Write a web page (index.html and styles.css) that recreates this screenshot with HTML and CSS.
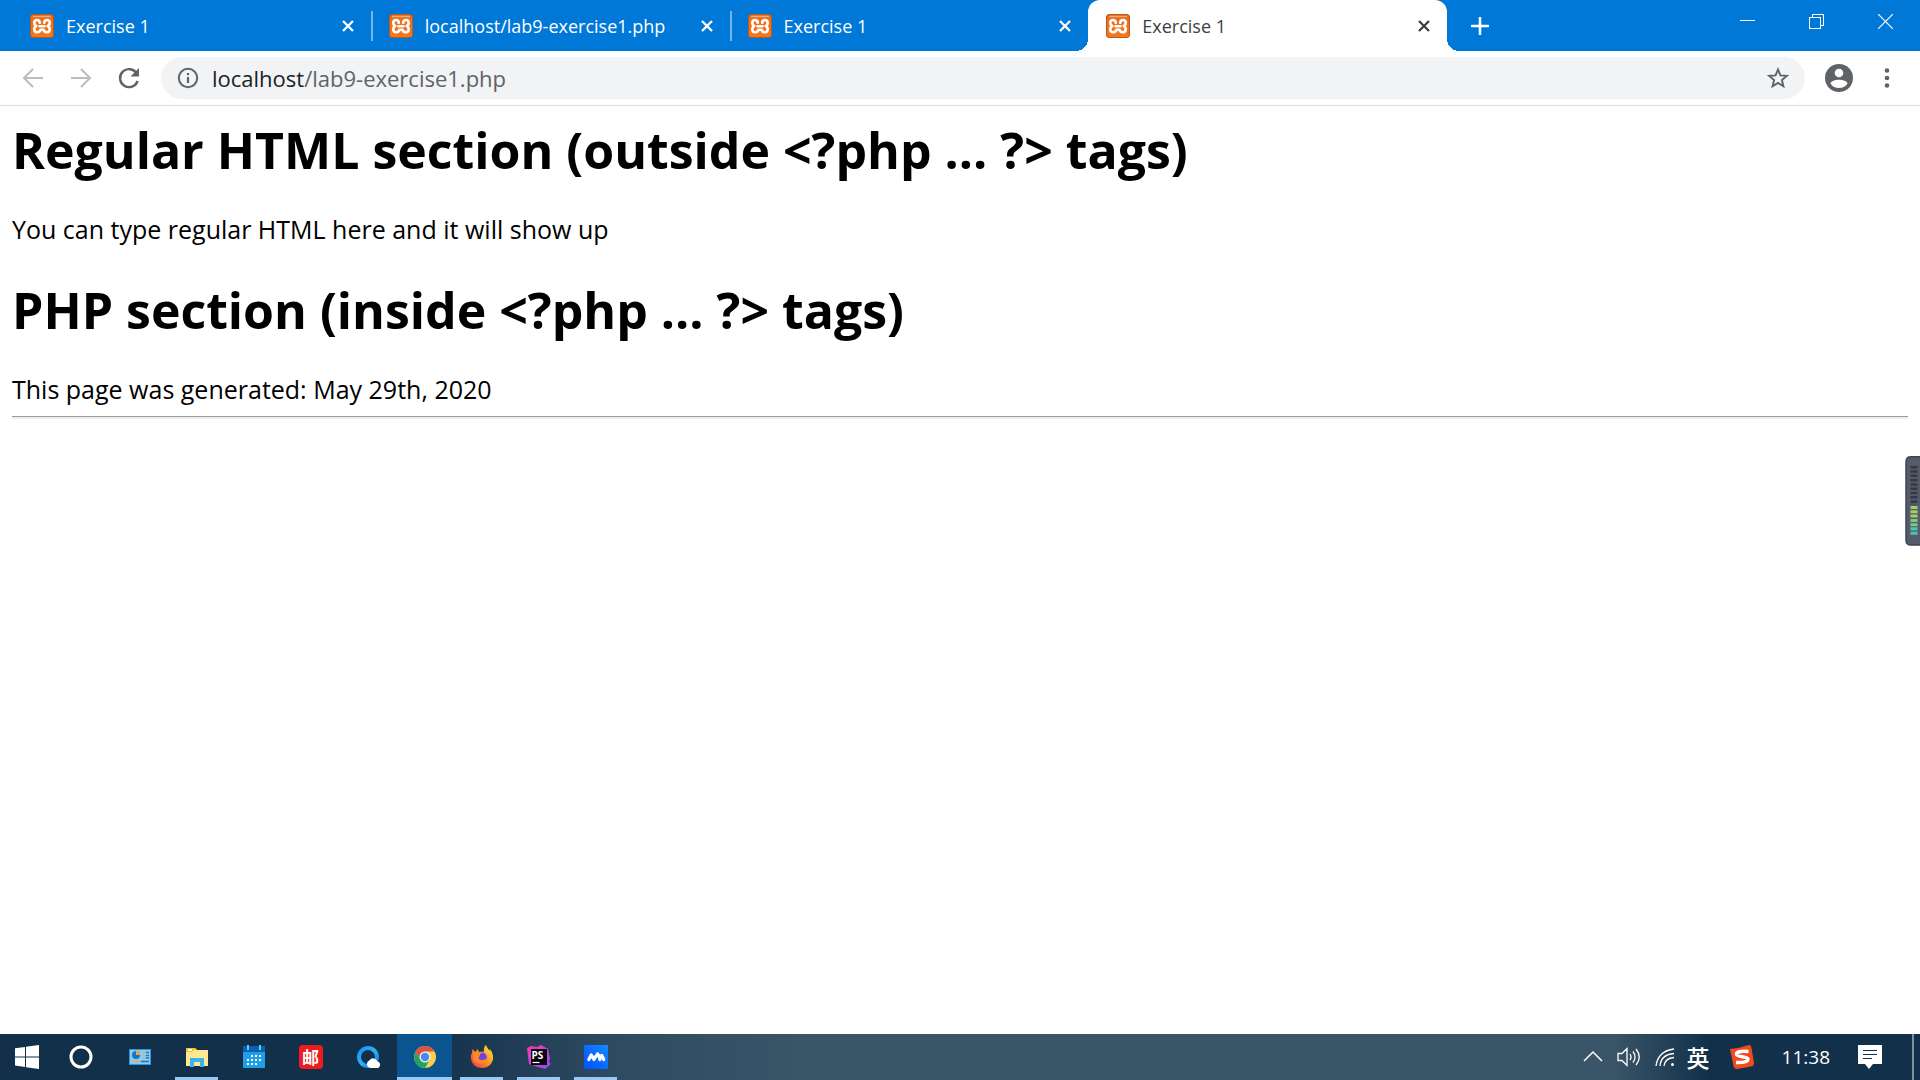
FILE: index.html
```
<!DOCTYPE html>
<html lang="en">
<head>
<meta charset="utf-8">
<title>Exercise 1</title>
<link rel="stylesheet" href="styles.css">
</head>
<body>
<svg class="defs" aria-hidden="true">
  <defs>
    <linearGradient id="xg" x1="0" y1="0" x2="0" y2="1"><stop offset="0" stop-color="#d9661f"/><stop offset=".2" stop-color="#ee6f1c"/><stop offset="1" stop-color="#f5771f"/></linearGradient>
    <linearGradient id="qq" x1="0" y1="0" x2="1" y2="1"><stop offset="0" stop-color="#1f8df5"/><stop offset=".5" stop-color="#2cb4fb"/><stop offset="1" stop-color="#1470e0"/></linearGradient>
    <linearGradient id="ff" x1="1" y1="0" x2="0" y2="1"><stop offset="0" stop-color="#fff04a"/><stop offset=".45" stop-color="#ff9a1f"/><stop offset="1" stop-color="#f8265c"/></linearGradient>
    <linearGradient id="ps" x1="0" y1="0" x2="1" y2="1"><stop offset="0" stop-color="#f03c9c"/><stop offset=".5" stop-color="#d240dc"/><stop offset="1" stop-color="#8c4af5"/></linearGradient>
    <linearGradient id="mm" x1="0" y1="1" x2="1" y2="0"><stop offset="0" stop-color="#0050ff"/><stop offset="1" stop-color="#1489ff"/></linearGradient>
    <symbol id="xampp" viewBox="0 0 24 24">
      <rect x=".5" y=".5" width="23" height="23" rx="2.500" fill="url(#xg)" stroke="#b9581c"/>
      <path d="M3 2.500h18" stroke="#f3a878" stroke-width="1.500"/>
      <path d="M9.800 8.800C9.500 5 4.200 5.200 4.300 8.800c0 1.700.8 2.700 2 3.200-1.200.5-2 1.500-2 3.200 0 3.800 5 4 6.200.6h3c1.200 3.400 6.200 3.200 6.200-.6 0-1.700-.8-2.700-2-3.200 1.200-.5 2-1.500 2-3.200.1-3.600-5.200-3.800-5.500 0M9.500 12.200h5" fill="none" stroke="#fff" stroke-width="2.600" stroke-linecap="round" stroke-linejoin="round"/>
    </symbol>
    <symbol id="x" viewBox="0 0 14 14"><path d="M2 2l10 10M12 2L2 12" fill="none" stroke="currentColor" stroke-width="2.300"/></symbol>
  </defs>
</svg>

<header>
  <div class="tabstrip">
    <div class="tabs" role="tablist">
      <div class="tab"><svg class="favicon"><use href="#xampp"/></svg><span class="title">Exercise 1</span><button class="close" aria-label="Close tab"><svg><use href="#x"/></svg></button></div>
      <div class="tab"><svg class="favicon"><use href="#xampp"/></svg><span class="title">localhost/lab9-exercise1.php</span><button class="close" aria-label="Close tab"><svg><use href="#x"/></svg></button></div>
      <div class="tab"><svg class="favicon"><use href="#xampp"/></svg><span class="title">Exercise 1</span><button class="close" aria-label="Close tab"><svg><use href="#x"/></svg></button></div>
      <div class="tab active"><svg class="favicon"><use href="#xampp"/></svg><span class="title">Exercise 1</span><button class="close" aria-label="Close tab"><svg><use href="#x"/></svg></button></div>
    </div>
    <button class="newtab" aria-label="New tab"><svg width="18" height="18" viewBox="0 0 18 18"><path d="M9 1v16M1 9h16" stroke="#fff" stroke-width="2.600" stroke-linecap="round"/></svg></button>
    <div class="winbuttons">
      <button aria-label="Minimize"><svg width="15" height="15" viewBox="0 0 15 15" shape-rendering="crispEdges"><path d="M0 6.500h15" stroke="#fff"/></svg></button>
      <button aria-label="Restore"><svg width="15" height="15" viewBox="0 0 15 15" fill="none" stroke="#fff" shape-rendering="crispEdges"><path d="M.5 3.500h11v11H.5zM3.500 3.500v-3h11v11h-3"/></svg></button>
      <button aria-label="Close"><svg width="15" height="15" viewBox="0 0 15 15"><path d="M0 0l15 15M15 0L0 15" stroke="#fff" stroke-width="1.200"/></svg></button>
    </div>
  </div>

  <div class="toolbar">
    <div class="nav">
      <button aria-label="Back"><svg width="24" height="24" viewBox="0 0 24 24" fill="none" stroke="#babcbe" stroke-width="2"><path d="M22 12H3M12 3l-9 9 9 9"/></svg></button>
      <button aria-label="Forward"><svg width="24" height="24" viewBox="0 0 24 24" fill="none" stroke="#babcbe" stroke-width="2"><path d="M2 12h19M12 3l9 9-9 9"/></svg></button>
      <button aria-label="Reload"><svg width="24" height="24" viewBox="0 0 24 24"><path d="M19.800 7.500A9 9 0 1 0 20.600 15" fill="none" stroke="#5f6368" stroke-width="2.400"/><path d="M22 2v8.500h-8.500z" fill="#5f6368"/></svg></button>
    </div>
    <div class="omnibox">
      <svg width="22" height="22" viewBox="0 0 22 22"><circle cx="11" cy="11" r="9.200" fill="none" stroke="#5f6368" stroke-width="2"/><path d="M11 10v6M11 6v2.200" stroke="#5f6368" stroke-width="2.200"/></svg>
      <span class="url"><span class="host">localhost</span>/lab9-exercise1.php</span>
      <button class="star" aria-label="Bookmark this page"><svg width="22" height="22" viewBox="0 0 22 22"><path d="M11 2.500l2.400 5.900 6.400.5-4.900 4.100 1.500 6.200L11 15.900l-5.400 3.300L7.100 13 2.200 8.900l6.400-.5z" fill="none" stroke="#5f6368" stroke-width="1.900"/></svg></button>
    </div>
    <div class="actions">
      <button aria-label="Profile"><svg width="28" height="28" viewBox="0 0 28 28"><circle cx="14" cy="14" r="14" fill="#5f6368"/><circle cx="14" cy="9" r="4.300" fill="#fff"/><path d="M5.500 19.500c1.500-5 15.500-5 17 0-3.500 6-13.500 6-17 0z" fill="#fff"/></svg></button>
      <button aria-label="Menu"><svg width="6" height="20" viewBox="0 0 6 20" fill="#5f6368"><circle cx="3" cy="2.500" r="2.300"/><circle cx="3" cy="10" r="2.300"/><circle cx="3" cy="17.500" r="2.300"/></svg></button>
    </div>
  </div>
</header>

<main>
  <h1>Regular HTML section (outside &lt;?php ... ?&gt; tags)</h1>
  <p>You can type regular HTML here and it will show up</p>
  <h1>PHP section (inside &lt;?php ... ?&gt; tags)</h1>
  <p>This page was generated: May 29th, 2020</p>
  <hr>
</main>

<svg class="meter" width="15" height="90" viewBox="0 0 15 90">
  <path d="M16 .8H6Q1 .8 1 6v78q0 5 5 5h10z" fill="#555b6b" stroke="#3f4452" stroke-width="1.500"/>
  <path d="M9 10v39" stroke="#353944" stroke-width="7" stroke-dasharray="2.500 1.800"/>
  <path d="M9 50v12" stroke="#a3cf68" stroke-width="7" stroke-dasharray="3 1.300"/>
  <path d="M9 62.900v9" stroke="#79cb80" stroke-width="7" stroke-dasharray="3 1.300"/>
  <path d="M9 71.500v8" stroke="#4fc4aa" stroke-width="7" stroke-dasharray="3 1.300"/>
</svg>

<footer class="taskbar">
  <div class="system">
    <button aria-label="Start"><svg width="24" height="24" viewBox="0 0 24 24" fill="#fff"><path d="M0 3.200l10-1.300v9.600H0zM11 1.700L24 0v11.500H11zM0 12.500h10v9.400L0 20.600zM11 12.500h13V24l-13-1.800z"/></svg></button>
    <button aria-label="Cortana"><svg width="24" height="24" viewBox="0 0 24 24"><circle cx="12" cy="12" r="10" fill="none" stroke="#fff" stroke-width="3"/></svg></button>
  </div>
  <div class="apps">
    <button aria-label="Control Panel"><svg width="24" height="24" viewBox="0 0 24 24"><path d="M1 4h22v16H1z" fill="#3696cc"/><path d="M2 5h20v14H2z" fill="#82cdfa"/><circle cx="8" cy="10" r="4" fill="#1875c5"/><path d="M8 10V6a4 4 0 0 1 4 4z" fill="#ffa52c"/><path d="M15 7.500h2M15 10.500h2M15 13h2" stroke="#ffa52c" stroke-width="1.500"/><path d="M18 7.500h3M18 10.500h3M18 13h3M13 16.500h8" stroke="#1875c5" stroke-width="1.500"/><path d="M4 16.500h9" stroke="#ffa52c"/></svg></button>
    <button class="running" aria-label="File Explorer"><svg width="24" height="24" viewBox="0 0 24 24"><path d="M1 3h9l2 2h11v16H1z" fill="#ffe793"/><path d="M1 3h9l2 2H9L7 7H1z" fill="#f9bd24"/><path d="M3 4h4v2H3z" fill="#fff"/><path d="M5 22v-9h14v9h-4v-5H9v5z" fill="#3bb4ea"/></svg></button>
    <button aria-label="Calendar"><svg width="24" height="24" viewBox="0 0 24 24"><path d="M1 2h22v20q0 1-1 1H2q-1 0-1-1z" fill="#1f9fe8"/><path d="M1 1h22v6H1z" fill="#0c61b0"/><path d="M5 0h2v5H5zM17 0h2v5h-2z" fill="#55d0fa"/><path d="M9 11h10M5 15h14M5 19h10" stroke="#fff" stroke-width="2" stroke-dasharray="2 2"/></svg></button>
    <button aria-label="Mail"><span class="mail">邮</span></button>
    <button aria-label="QQ Browser"><svg width="24" height="24" viewBox="0 0 24 24"><circle cx="12" cy="12" r="9" fill="none" stroke="url(#qq)" stroke-width="4"/><path d="M14.500 23a4 4 0 0 1-1-7.700 4.500 4.500 0 0 1 8 1.200A3.300 3.300 0 0 1 20.500 23z" fill="#fff"/></svg></button>
    <button class="running current" aria-label="Chrome"><svg width="24" height="24" viewBox="0 0 24 24"><circle cx="12" cy="12" r="11" fill="#fcd04a"/><path d="M2.500 6.500A11 11 0 0 1 21.500 6.500H12L7.200 14.700z" fill="#dd5144"/><path d="M2.500 6.500A11 11 0 0 0 12 23l4.800-8.200H7.200z" fill="#1ea362"/><circle cx="12" cy="12" r="5.500" fill="#f1f1f1"/><circle cx="12" cy="12" r="4.200" fill="#4688f4"/></svg></button>
    <button class="running" aria-label="Firefox"><svg width="24" height="24" viewBox="0 0 24 24"><path d="M2 8l.5-4 3 3 2-3 1.500 3q3-1 5 0c-.5-3 .5-6 2-7 1 3 3 4 3.500 6L20 4c2 3 3.500 6 3 10-2 12-20 12-22 0-.3-3 0-4 1-6z" fill="url(#ff)"/><circle cx="12" cy="12.500" r="5" fill="#8048e4"/><path d="M3.500 8c3-2 6 0 9 1-1 2-4 2-4 4 1 3 6 3 8 0 1 6-9 8-13 2z" fill="#ff8b22"/><circle cx="12.500" cy="11.500" r="3" fill="#7040db"/></svg></button>
    <button class="running" aria-label="PhpStorm"><span class="storm"><svg width="24" height="24" viewBox="0 0 24 24"><path d="M0 3l4-2 6 1 4-2 7 4 1 5 1 5-1 3 2 2-6 5-7-2-9-3z" fill="url(#ps)"/><path d="M4 4h16v16H4z" fill="#060608"/><path d="M5.500 17.500h7" stroke="#fff" stroke-width="1.200"/></svg><span class="ps">PS</span></span></button>
    <button class="running" aria-label="Meeting"><svg width="24" height="24" viewBox="0 0 24 24"><path d="M0 0h24v24H0z" fill="url(#mm)"/><path d="M4.800 14.500L7.200 10M9.800 14.500L13.600 8.800M15 10.500l1 4M17.800 10.500l2 4M8 11l.7 1.500" fill="none" stroke="#fff" stroke-width="3.200" stroke-linecap="round"/></svg></button>
  </div>
  <div class="tray">
    <button aria-label="Show hidden icons"><svg width="20" height="24" viewBox="0 0 20 24"><path d="M1 16l9-9 9 9" fill="none" stroke="#fff" stroke-width="1.500"/></svg></button>
    <button class="status" aria-label="Volume"><svg width="24" height="24" viewBox="0 0 24 24" fill="none" stroke="#fff" stroke-width="1.300"><path d="M1 8.500h4l5-5v17l-5-5H1zM13 9q2 3 0 6M16 6.500q4 5.500 0 11M19 4q6.500 8 0 16"/></svg></button>
    <button class="status" aria-label="Network"><svg width="20" height="24" viewBox="0 0 20 24" fill="none" stroke="#fff" stroke-width="1.300"><path d="M1 21Q3 6 19 4M5 21Q6 9.500 19 8.500M9 21q1-8 10-8.500"/><circle cx="17.500" cy="19.500" r="1.500" fill="#fff" stroke="none"/></svg></button>
    <button class="ime">英</button>
    <button class="sogou" aria-label="Sogou input"><svg width="24" height="24" viewBox="0 0 24 24"><path d="M0 4Q10 3 19 0q2 0 2.500 3L24 18q0 3-3 3.500L7 24q-3 0-3.500-3z" fill="#ef4b1d"/><path d="M18.500 6.500Q6 5.500 6.500 9.500c.5 2.500 11 2 11.500 4.500q0 4-12 3.500" fill="none" stroke="#fff" stroke-width="3.500"/></svg></button>
    <time>11:38</time>
    <button aria-label="Notifications"><svg width="24" height="24" viewBox="0 0 24 24"><path d="M0 0h24v19h-9l-4 5-4-5H0z" fill="#fff"/><path d="M5 5.500h14M5 9.500h14M5 13.500h9" stroke="#12304a"/></svg></button>
    <button class="desktop" aria-label="Show desktop"></button>
  </div>
</footer>
</body>
</html>
```
FILE: styles.css
```
* { box-sizing: border-box; }

body {
  margin: 0;
  min-height: 100vh;
  display: flex;
  flex-direction: column;
  background: #fff;
  color: #000;
  font-family: "Open Sans", "Noto Sans", "Noto Sans CJK SC", sans-serif;
}

.defs { position: absolute; width: 0; height: 0; }

button {
  display: flex;
  align-items: center;
  justify-content: center;
  padding: 0;
  border: 0;
  background: none;
  color: inherit;
  font: inherit;
}

svg { display: block; flex: none; }

/* Tab strip */
.tabstrip {
  display: flex;
  height: 51px;
  padding-left: 12px;
  background: #0078d7;
  color: #fff;
}

.tabs { display: flex; flex: 0 1 1435px; min-width: 0; }

.tab {
  position: relative;
  display: flex;
  align-items: center;
  flex: 1 1 0;
  min-width: 0;
  padding: 0 16px 0 18px;
}

.tab:nth-child(-n+2)::after {
  content: "";
  position: absolute;
  right: -2px;
  top: 11px;
  width: 2px;
  height: 30px;
  background: #73b5ea;
}

.tab.active { background: #fff; color: #3c4043; border-radius: 12px 12px 0 0; }

/* Curved feet where the active tab meets the toolbar */
.tab.active::before,
.tab.active::after {
  content: "";
  position: absolute;
  bottom: 0;
  width: 12px;
  height: 12px;
}

.tab.active::before { left: -12px; background: radial-gradient(circle at 0 0, transparent 12px, #fff 12px); }
.tab.active::after { right: -12px; background: radial-gradient(circle at 100% 0, transparent 12px, #fff 12px); }

.favicon { width: 24px; height: 24px; }

.title {
  flex: 1;
  min-width: 0;
  margin-left: 12px;
  overflow: hidden;
  white-space: nowrap;
  font-size: 18px;
  line-height: 24px;
}

.close svg { width: 14px; height: 14px; }
.newtab { width: 66px; }

.winbuttons { display: flex; margin-left: auto; height: 42px; }
.winbuttons button { width: 69px; }

/* Toolbar */
.toolbar {
  display: flex;
  align-items: center;
  height: 55px;
  padding: 0 30px 0 21px;
  gap: 20px;
  border-bottom: 1px solid #dadce0;
}

.nav { display: flex; gap: 24px; }
.actions { display: flex; gap: 31px; }

.omnibox {
  display: flex;
  align-items: center;
  flex: 1;
  height: 42px;
  padding: 0 16px;
  border-radius: 21px;
  background: #f1f3f4;
}

.url { flex: 1; margin-left: 13px; font-size: 22px; line-height: 30px; color: #5f6368; }
.host { color: #202124; }

/* Page */
main { flex: 1; padding: 10px 12px; }

h1 { margin: 0 0 28px; font-size: 50px; line-height: 68px; }
p { margin: 0 0 10px; font-size: 25px; line-height: 34px; }
p + h1 { margin-top: 30px; }
hr { margin: 0; height: 3px; border: 0; border-top: 1px solid #9a9a9a; background: #eee; }

/* Level meter docked at the right edge of the screen */
.meter { position: absolute; right: 0; top: 456px; }

/* Taskbar */
.taskbar {
  display: flex;
  height: 46px;
  background: linear-gradient(90deg, #12304a 0, #12304a 22%, #2f4b61 32%, #3a5568 42%, #3a5568 84%, #12304a 89%);
  color: #fff;
}

.system { display: flex; }
.system button { width: 54px; }
.apps { display: flex; gap: 2px; padding-left: 4px; }
.apps button { position: relative; width: 55px; }

.running::after {
  content: "";
  position: absolute;
  left: 6px;
  right: 6px;
  bottom: 0;
  height: 3px;
  background: #99c9f1;
}

.current { background: #0a5590; }
.current::after { left: 0; right: 0; }

.mail {
  width: 24px;
  height: 24px;
  border-radius: 4px;
  background: #ee1b1f;
  font: 700 17px/24px "Noto Sans CJK SC", sans-serif;
}

.storm { position: relative; }
.ps { position: absolute; left: 5px; top: 4px; font-size: 10px; font-weight: 700; line-height: 12px; }

.tray { display: flex; align-items: center; gap: 12px; margin-left: auto; }
.status { margin-left: 2px; }
.ime { font: 500 23px/32px "Noto Sans CJK SC", sans-serif; }
.sogou { margin-left: 8px; }
time { margin: 0 16px; font-size: 19px; line-height: 26px; }
.desktop { align-self: stretch; width: 8px; margin-left: 18px; border-left: 2px solid #7f909f; }
```
